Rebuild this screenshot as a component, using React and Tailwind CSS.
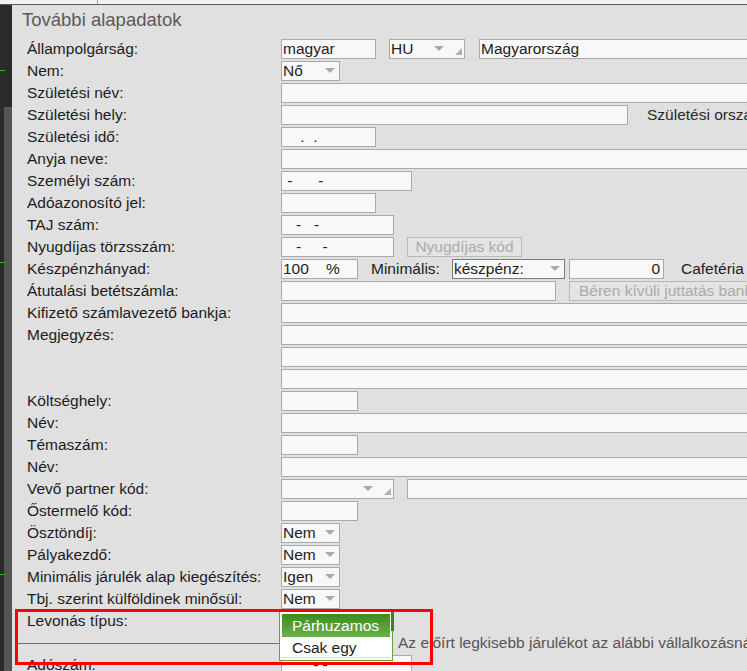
import React from 'react';

const Arrow = ({ className = '' }) => (
  <svg className={`absolute ${className}`} width="10" height="5" viewBox="0 0 10 5">
    <path d="M0 0H10L5 5Z" fill="#a8a8a8" />
  </svg>
);

const Corner = () => (
  <svg className="absolute right-[2px] bottom-[3px]" width="7" height="7" viewBox="0 0 7 7">
    <path d="M7 0V7H0Z" fill="#b0b0b0" />
  </svg>
);

const Field = ({ className = '', children }) => (
  <div className={`h-[20px] shrink-0 border border-[#a9a9a9] bg-[#f8f8f8] px-[1px] leading-[18px] text-[#222] whitespace-pre overflow-hidden ${className}`}>
    {children}
  </div>
);

const Select = ({ className = '', value = '', corner = false, dark = false }) => (
  <div className={`relative h-[20px] shrink-0 border ${dark ? 'border-[#7d7d7d]' : 'border-[#a9a9a9]'} bg-[#f8f8f8] px-[1px] leading-[18px] text-[#222] ${className}`}>
    {value}
    <Arrow className={corner ? 'top-[6px] right-[20px]' : 'top-[6px] right-[4px]'} />
    {corner && <Corner />}
  </div>
);

const Button = ({ className = '', children }) => (
  <div className={`h-[20px] shrink-0 border border-[#b9b9b9] bg-[#e4e4e4] leading-[18px] text-[#ababab] whitespace-nowrap overflow-hidden ${className}`}>
    {children}
  </div>
);

const Row = ({ label = '', children }) => (
  <div className="flex items-center h-[20px] mb-[2px]">
    <div className="w-[254px] shrink-0 leading-[20px] text-[#1c1c1c] whitespace-nowrap">{label}</div>
    <div className="flex items-center flex-1 min-w-0">{children}</div>
  </div>
);

export default function App() {
  return (
    <div className="relative w-[747px] h-[671px] overflow-hidden bg-[#e0e0e0] font-['Liberation_Sans',Arial,sans-serif] text-[15.5px]">
      <div className="relative h-[4px] bg-[#f1f1f1]">
        <div className="absolute left-[97px] top-0 w-px h-[4px] bg-[#9a9a9a]" />
      </div>
      <div className="h-px bg-[#5a5a5a]" />

      <div className="flex h-[666px]">
        <div className="relative flex w-[12px] shrink-0">
          <div className="w-[4px] bg-[#2b2b2b]" />
          <div className="flex flex-col w-[8px]">
            <div className="h-[102px] bg-[#2b2b2b]" />
            <div className="flex-1 bg-[#545454]" />
          </div>
          <div className="absolute left-0 top-[65px] w-[5px] h-px bg-[#3fae3f]" />
          <div className="absolute left-0 top-[257px] w-[5px] h-px bg-[#3fae3f]" />
          <div className="absolute left-0 top-[569px] w-[5px] h-px bg-[#3fae3f]" />
        </div>

        <div className="w-[900px] shrink-0 pl-[15px]">
          <div className="h-[34px] -ml-[5px] leading-[30px] text-[18.5px] text-[#5a5a5a]">További alapadatok</div>

          <Row label="Állampolgárság:">
            <Field className="w-[95px]">magyar</Field>
            <Select className="ml-[13px] w-[76px]" value="HU" corner />
            <Field className="ml-[14px] flex-1">Magyarország</Field>
          </Row>
          <Row label="Nem:">
            <Select className="w-[59px]" value="Nő" />
          </Row>
          <Row label="Születési név:">
            <Field className="flex-1" />
          </Row>
          <Row label="Születési hely:">
            <Field className="w-[347px]" />
            <div className="ml-[19px] text-[#2a2a2a] whitespace-nowrap">Születési ország:</div>
          </Row>
          <Row label="Születési idő:">
            <Field className="w-[95px]">{'    .  .'}</Field>
          </Row>
          <Row label="Anyja neve:">
            <Field className="flex-1" />
          </Row>
          <Row label="Személyi szám:">
            <Field className="w-[131px]">{' -      -'}</Field>
          </Row>
          <Row label="Adóazonosító jel:">
            <Field className="w-[95px]" />
          </Row>
          <Row label="TAJ szám:">
            <Field className="w-[113px]">{'   -   -'}</Field>
          </Row>
          <Row label="Nyugdíjas törzsszám:">
            <Field className="w-[113px]">{'   -     -'}</Field>
            <Button className="ml-[13px] w-[115px] text-center">Nyugdíjas kód</Button>
          </Row>
          <Row label="Készpénzhányad:">
            <Field className="w-[77px]">{'100    %'}</Field>
            <div className="ml-[13px] w-[81px] shrink-0 text-[#1c1c1c]">Minimális:</div>
            <Select className="w-[113px]" value="készpénz:" dark />
            <Field className="ml-[4px] w-[95px] text-right pr-[3px]">0</Field>
            <div className="ml-[17px] text-[#1c1c1c] whitespace-nowrap">Cafetéria</div>
          </Row>
          <Row label="Átutalási betétszámla:">
            <Field className="w-[275px]" />
            <Button className="ml-[13px] w-[300px] pl-[9px]">Béren kívüli juttatás bankszámlái</Button>
          </Row>
          <Row label="Kifizető számlavezető bankja:">
            <Field className="flex-1" />
          </Row>
          <Row label="Megjegyzés:">
            <Field className="flex-1" />
          </Row>
          <Row>
            <Field className="flex-1" />
          </Row>
          <Row>
            <Field className="flex-1" />
          </Row>
          <Row label="Költséghely:">
            <Field className="w-[77px]" />
          </Row>
          <Row label="Név:">
            <Field className="flex-1" />
          </Row>
          <Row label="Témaszám:">
            <Field className="w-[77px]" />
          </Row>
          <Row label="Név:">
            <Field className="flex-1" />
          </Row>
          <Row label="Vevő partner kód:">
            <Select className="w-[113px]" corner />
            <Field className="ml-[13px] flex-1" />
          </Row>
          <Row label="Őstermelő kód:">
            <Field className="w-[77px]" />
          </Row>
          <Row label="Ösztöndíj:">
            <Select className="w-[59px]" value="Nem" />
          </Row>
          <Row label="Pályakezdő:">
            <Select className="w-[59px]" value="Nem" />
          </Row>
          <Row label="Minimális járulék alap kiegészítés:">
            <Select className="w-[59px]" value="Igen" />
          </Row>
          <Row label="Tbj. szerint külföldinek minősül:">
            <Select className="w-[59px]" value="Nem" />
          </Row>
          <Row label="Levonás típus:">
            <div className="w-[113px] h-[20px]" />
          </Row>

          <div className="flex items-center h-[20px] mb-[2px] -ml-[11px]">
            <div className="w-[265px] shrink-0 h-px bg-[#6f6f6f]" />
            <div className="ml-[117px] text-[#555] whitespace-nowrap">
              Az előírt legkisebb járulékot az alábbi vállalkozásnál fizeti
            </div>
          </div>

          <Row label="Adószám:">
            <Field className="w-[131px]">{'       - -'}</Field>
          </Row>
        </div>
      </div>

      {/* open dropdown of Levonás típus */}
      <div className="absolute left-[279px] top-[611px] w-[114px] h-[50px] border border-[#62a43e] bg-white px-[2px] pt-[2px]">
        <div className="h-[23px] pl-[10px] leading-[23px] text-white bg-gradient-to-b from-[#3c8b1b] to-[#6cb14a]">
          Párhuzamos
        </div>
        <div className="h-[21px] pl-[10px] leading-[21px] text-[#1c1c1c] border-b border-[#d8d8d8]">Csak egy</div>
        <div className="absolute right-[-2px] top-[-1px] w-[3px] h-[20px] bg-[#3f7f22]" />
      </div>

      {/* red highlight frame */}
      <div className="absolute left-[15px] top-[609px] w-[418px] h-[56px] border-[3px] border-[#ff0000]" />
    </div>
  );
}
